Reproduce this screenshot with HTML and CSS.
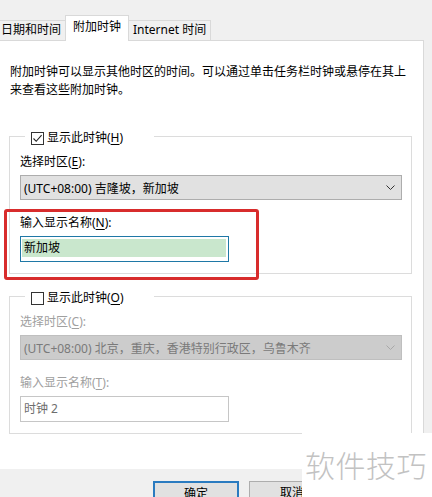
FILE: index.html
```html
<!DOCTYPE html>
<html lang="zh-CN">
<head>
    <meta charset="UTF-8">
    <meta name="viewport" content="width=device-width, initial-scale=1.0">
    <title>附加时钟</title>
    <link rel="stylesheet" href="styles.css">
</head>
<body>

<div class="tabs">
    <div class="tab">日期和时间</div>
    <div class="tab active">附加时钟</div>
    <div class="tab">Internet 时间</div>
</div>

<div class="panel">
    <p class="intro">附加时钟可以显示其他时区的时间。可以通过单击任务栏时钟或悬停在其上来查看这些附加时钟。</p>

    <div class="group">
        <div class="group-title">
            <span class="check checked">
                <svg width="11" height="11" viewBox="0 0 11 11"><path d="M1.5 5.5 L4.2 8.3 L9.6 2.2" fill="none" stroke="#222" stroke-width="1.1"/></svg>
            </span>
            <span>显示此时钟(<u>H</u>)</span>
        </div>
        <div class="label">选择时区(<u>E</u>):</div>
        <div class="select">
            <span>(UTC+08:00) 吉隆坡，新加坡</span>
            <svg class="chevron" width="9" height="5" viewBox="0 0 9 5"><path d="M0.5 0.5 L4.5 4.5 L8.5 0.5" fill="none" stroke="#333" stroke-width="1"/></svg>
        </div>
        <div class="label label-name">输入显示名称(<u>N</u>):</div>
        <div class="input focused"><span class="selected-text">新加坡</span></div>
    </div>

    <div class="group second">
        <div class="group-title">
            <span class="check"></span>
            <span>显示此时钟(<u>O</u>)</span>
        </div>
        <div class="label disabled">选择时区(<u>C</u>):</div>
        <div class="select disabled">
            <span>(UTC+08:00) 北京，重庆，香港特别行政区，乌鲁木齐</span>
            <svg class="chevron" width="9" height="5" viewBox="0 0 9 5"><path d="M0.5 0.5 L4.5 4.5 L8.5 0.5" fill="none" stroke="#a8a8a8" stroke-width="1"/></svg>
        </div>
        <div class="label label-name disabled">输入显示名称(<u>T</u>):</div>
        <div class="input disabled">时钟 2</div>
    </div>

    <div class="highlight"></div>
</div>

<div class="footer">
    <button class="btn default">确定</button>
    <button class="btn">取消</button>
</div>

<div class="watermark">软件技巧</div>

</body>
</html>
```

FILE: styles.css
```css
body {
    font-family: "Noto Sans", "Noto Sans CJK SC", sans-serif;
    font-size: 12px;
    color: #000;
    background-color: #f0f0f0;
    margin: 0;
    width: 432px;
    height: 497px;
    overflow: hidden;
    position: relative;
}
u {
    text-underline-offset: 2px;
}

/* tab strip */
.tabs {
    display: flex;
    align-items: flex-end;
    height: 40px;
    margin-left: -4px;
}
.tab {
    height: 20px;
    line-height: 18px;
    padding: 0 4px;
    border: 1px solid #d9d9d9;
    border-bottom: none;
    background: #f0f0f0;
    box-sizing: border-box;
    white-space: nowrap;
}
.tab + .tab {
    margin-left: -1px;
}
.tab.active {
    height: 26px;
    line-height: 22px;
    padding: 0 7px;
    margin-bottom: -1px;
    background: #fff;
    position: relative;
    z-index: 1;
}

/* page */
.panel {
    width: 424px;
    height: 429px;
    background: #fff;
    border-top: 1px solid #d9d9d9;
    border-right: 1px solid #d9d9d9;
    box-sizing: border-box;
    padding: 0 0 0 9px;
    position: relative;
}
.intro {
    margin: 22px 0 0 1px;
    width: 400px;
    line-height: 18px;
}

.group {
    width: 403px;
    margin-top: 37px;
    border: 1px solid #dcdcdc;
    box-sizing: border-box;
    padding: 0 0 11px 10px;
}
.group.second {
    margin-top: 22px;
}
.group-title {
    display: flex;
    align-items: center;
    gap: 3px;
    width: 129px;
    height: 16px;
    margin: -7px 0 0 5px;
    padding-left: 6px;
    box-sizing: border-box;
    background: #fff;
    line-height: 16px;
}
.check {
    width: 13px;
    height: 13px;
    border: 1px solid #333;
    box-sizing: border-box;
    display: flex;
    align-items: center;
    justify-content: center;
    flex: none;
}

.label {
    margin-top: 8px;
    line-height: 16px;
}
.label-name {
    margin-top: 15px;
}
.label.disabled {
    color: #a0a0a0;
}

.select {
    display: flex;
    align-items: center;
    justify-content: space-between;
    width: 382px;
    height: 25px;
    margin-top: 5px;
    padding: 0 6px 0 3px;
    background: #e1e1e1;
    border: 1px solid #adadad;
    box-sizing: border-box;
    white-space: nowrap;
}
.select.disabled {
    background: #cccccc;
    border-color: #bfbfbf;
    color: #7a7a7a;
}

.input {
    width: 209px;
    height: 26px;
    margin-top: 5px;
    border: 1px solid #c6c6c6;
    box-sizing: border-box;
    padding: 0 3px;
    line-height: 24px;
}
.input.disabled {
    color: #6d6d6d;
}
.input.focused {
    border-color: #1f78a6;
    padding: 2px 2px 4px 1px;
    line-height: 18px;
}
.selected-text {
    display: block;
    height: 18px;
    padding-left: 2px;
    background: #c9e7cd;
}

/* red annotation box */
.highlight {
    position: absolute;
    left: 4px;
    top: 168px;
    width: 255px;
    height: 71px;
    border: 3px solid #d82c2c;
    border-radius: 3px;
    box-sizing: border-box;
}

/* dialog buttons */
.footer {
    display: flex;
    gap: 10px;
    padding: 12px 0 0 153px;
    border-top: 1px solid #e3e3e3;
    margin-top: -1px;
}
.btn {
    font-family: inherit;
    font-size: 12px;
    width: 86px;
    height: 24px;
    background: #e1e1e1;
    border: 1px solid #adadad;
    padding: 0;
    line-height: 22px;
}
.btn.default {
    border: 2px solid #2a7bc0;
}

.watermark {
    position: absolute;
    left: 302px;
    top: 433px;
    width: 130px;
    height: 64px;
    background: #fff;
    padding: 15px 0 0 3px;
    box-sizing: border-box;
    font-size: 30px;
    line-height: 32px;
    color: #c2c2c2;
    letter-spacing: 0.5px;
    font-family: "Noto Sans CJK SC", sans-serif;
    font-weight: 300;
}
```
